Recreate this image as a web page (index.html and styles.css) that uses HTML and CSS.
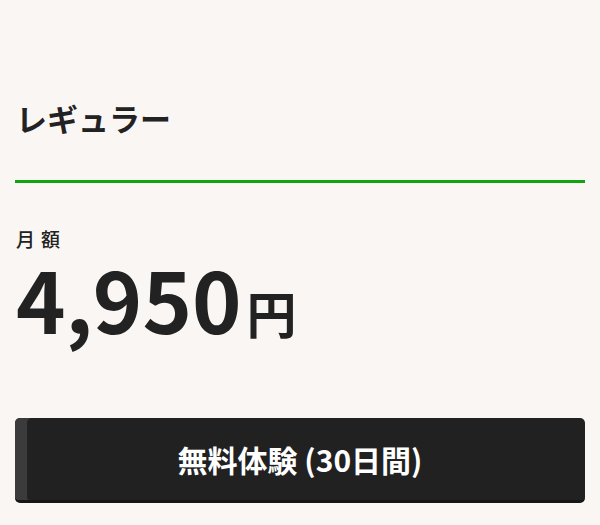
FILE: index.html
```html
<!DOCTYPE html>
<html lang="ja">
<head>
    <meta charset="utf-8">
    <title>料金プラン</title>
    <link rel="stylesheet" href="styles.css">
</head>
<body>
    <div class="plan">
        <!-- Plan name with green rule -->
        <h2 class="plan-name">レギュラー</h2>

        <!-- Monthly price -->
        <div class="price-block">
            <p class="price-label">月額</p>
            <p class="price"><span class="price-num">4,950</span><span class="price-unit">円</span></p>
        </div>

        <a class="trial-btn" href="#">無料体験 (30日間)</a>
    </div>
</body>
</html>
```

FILE: styles.css
```css
body {
    margin: 0;
    background-color: #faf6f3;
    color: #222;
    font-family: "Noto Sans CJK JP", "Noto Sans", sans-serif;
}

.plan {
    padding: 0 15px;
}

/* Plan name */
.plan-name {
    margin: 0;
    padding: 96px 1px 41px;
    font-size: 31px;
    font-weight: 700;
    line-height: 1.4;
    border-bottom: 3px solid #12a312;
}

/* Price */
.price-block {
    padding: 43px 1px 0;
}

.price-label {
    margin: 0;
    font-size: 19px;
    font-weight: 500;
    letter-spacing: 6px;
    line-height: 1.4;
}

.price {
    margin: 3px 0 0;
    display: flex;
    align-items: baseline;
    line-height: 1;
}

.price-num {
    font-size: 84px;
    font-weight: 700;
}

.price-unit {
    font-size: 50px;
    font-weight: 700;
    margin-left: 5px;
}

/* Trial button, darker stripe on the left edge */
.trial-btn {
    display: flex;
    justify-content: center;
    align-items: center;
    height: 82px;
    margin-top: 78px;
    background-color: #212121;
    box-shadow: inset 12px 0 #3b3b3b;
    border-bottom: 3px solid #161616;
    border-radius: 5px;
    color: #fff;
    font-size: 30px;
    font-weight: 700;
    text-decoration: none;
}
```
